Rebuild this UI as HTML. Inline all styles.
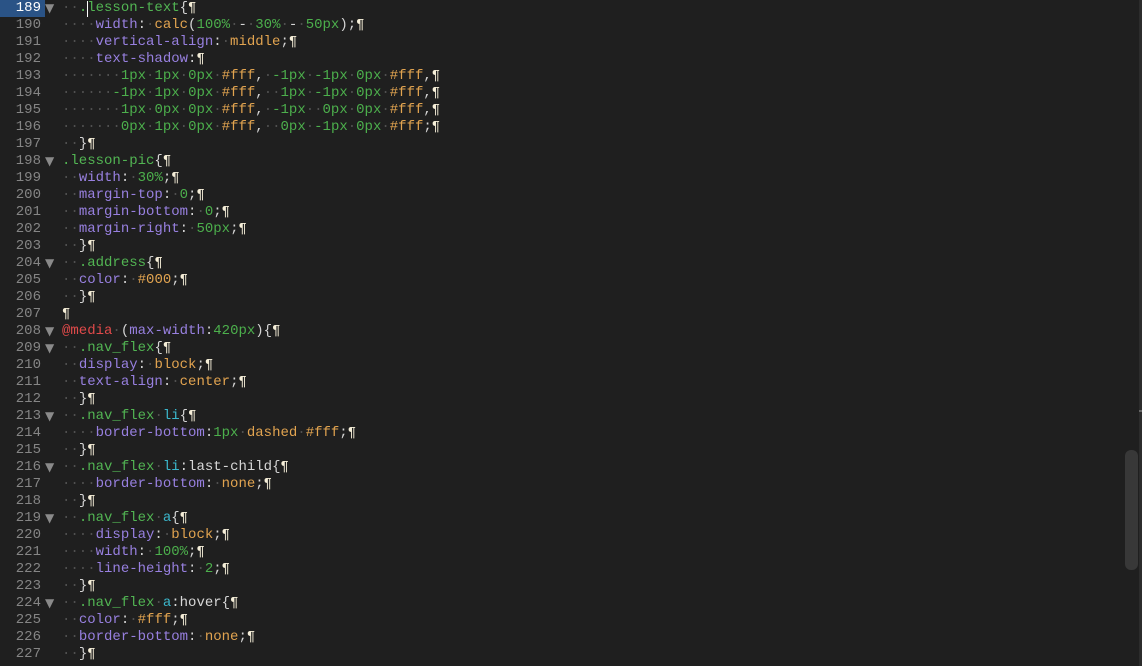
<!DOCTYPE html>
<html><head><meta charset="utf-8"><style>
html,body{margin:0;padding:0;background:#1f1f1f;width:1142px;height:666px;overflow:hidden}
#ed{position:relative;width:1142px;height:666px;font-family:"Liberation Mono",monospace;font-size:14px}
.l{position:absolute;left:0;height:17px;line-height:17px;white-space:pre;width:1100px}
.n{position:absolute;left:0;width:41px;text-align:right;color:#858585}
.a{background:#2a5386;color:#fff;width:45px;text-align:right;padding-right:4px;box-sizing:border-box}
.f{position:absolute;left:45px;color:#8a8a8a;font-size:12px;font-family:"DejaVu Sans",sans-serif}
.t{position:absolute;left:62px;color:#d4d4d4}
.d{color:#505050}.s{color:#52b553}.p{color:#9880e0}.v{color:#e2a450}.g{color:#4caf4c}.q{color:#f5eed8}.m{color:#e04a4a}.c{color:#3bb7cc}.w{color:#d8d8d8}
#sb{position:absolute;left:1125px;top:450px;width:13px;height:120px;background:#383838;border-radius:6px}
#tr{position:absolute;left:1139px;top:0;width:3px;height:666px;background:#2c2c2c}
#tk{position:absolute;left:1139px;top:410px;width:3px;height:2px;background:#666}
#cur{position:absolute;left:87px;top:1px;width:1px;height:16px;background:#fff}
</style></head><body><div id="ed">
<div id="tr"></div><div id="tk"></div><div id="sb"></div>
<div class="l" style="top:0"><span class="n a">189</span><span class="f">▼</span><span class="t"><span class="d">··</span><span class="s">.lesson-text</span>{<span class="q">¶</span></span></div>
<div class="l" style="top:17px"><span class="n">190</span><span class="t"><span class="d">····</span><span class="p">width</span>:<span class="d">·</span><span class="v">calc</span>(<span class="g">100%</span><span class="d">·</span>-<span class="d">·</span><span class="g">30%</span><span class="d">·</span>-<span class="d">·</span><span class="g">50px</span>);<span class="q">¶</span></span></div>
<div class="l" style="top:34px"><span class="n">191</span><span class="t"><span class="d">····</span><span class="p">vertical-align</span>:<span class="d">·</span><span class="v">middle</span>;<span class="q">¶</span></span></div>
<div class="l" style="top:51px"><span class="n">192</span><span class="t"><span class="d">····</span><span class="p">text-shadow</span>:<span class="q">¶</span></span></div>
<div class="l" style="top:68px"><span class="n">193</span><span class="t"><span class="d">·······</span><span class="g">1px</span><span class="d">·</span><span class="g">1px</span><span class="d">·</span><span class="g">0px</span><span class="d">·</span><span class="v">#fff</span>,<span class="d">·</span><span class="g">-1px</span><span class="d">·</span><span class="g">-1px</span><span class="d">·</span><span class="g">0px</span><span class="d">·</span><span class="v">#fff</span>,<span class="q">¶</span></span></div>
<div class="l" style="top:85px"><span class="n">194</span><span class="t"><span class="d">······</span><span class="g">-1px</span><span class="d">·</span><span class="g">1px</span><span class="d">·</span><span class="g">0px</span><span class="d">·</span><span class="v">#fff</span>,<span class="d">··</span><span class="g">1px</span><span class="d">·</span><span class="g">-1px</span><span class="d">·</span><span class="g">0px</span><span class="d">·</span><span class="v">#fff</span>,<span class="q">¶</span></span></div>
<div class="l" style="top:102px"><span class="n">195</span><span class="t"><span class="d">·······</span><span class="g">1px</span><span class="d">·</span><span class="g">0px</span><span class="d">·</span><span class="g">0px</span><span class="d">·</span><span class="v">#fff</span>,<span class="d">·</span><span class="g">-1px</span><span class="d">··</span><span class="g">0px</span><span class="d">·</span><span class="g">0px</span><span class="d">·</span><span class="v">#fff</span>,<span class="q">¶</span></span></div>
<div class="l" style="top:119px"><span class="n">196</span><span class="t"><span class="d">·······</span><span class="g">0px</span><span class="d">·</span><span class="g">1px</span><span class="d">·</span><span class="g">0px</span><span class="d">·</span><span class="v">#fff</span>,<span class="d">··</span><span class="g">0px</span><span class="d">·</span><span class="g">-1px</span><span class="d">·</span><span class="g">0px</span><span class="d">·</span><span class="v">#fff</span>;<span class="q">¶</span></span></div>
<div class="l" style="top:136px"><span class="n">197</span><span class="t"><span class="d">··</span>}<span class="q">¶</span></span></div>
<div class="l" style="top:153px"><span class="n">198</span><span class="f">▼</span><span class="t"><span class="s">.lesson-pic</span>{<span class="q">¶</span></span></div>
<div class="l" style="top:170px"><span class="n">199</span><span class="t"><span class="d">··</span><span class="p">width</span>:<span class="d">·</span><span class="g">30%</span>;<span class="q">¶</span></span></div>
<div class="l" style="top:187px"><span class="n">200</span><span class="t"><span class="d">··</span><span class="p">margin-top</span>:<span class="d">·</span><span class="g">0</span>;<span class="q">¶</span></span></div>
<div class="l" style="top:204px"><span class="n">201</span><span class="t"><span class="d">··</span><span class="p">margin-bottom</span>:<span class="d">·</span><span class="g">0</span>;<span class="q">¶</span></span></div>
<div class="l" style="top:221px"><span class="n">202</span><span class="t"><span class="d">··</span><span class="p">margin-right</span>:<span class="d">·</span><span class="g">50px</span>;<span class="q">¶</span></span></div>
<div class="l" style="top:238px"><span class="n">203</span><span class="t"><span class="d">··</span>}<span class="q">¶</span></span></div>
<div class="l" style="top:255px"><span class="n">204</span><span class="f">▼</span><span class="t"><span class="d">··</span><span class="s">.address</span>{<span class="q">¶</span></span></div>
<div class="l" style="top:272px"><span class="n">205</span><span class="t"><span class="d">··</span><span class="p">color</span>:<span class="d">·</span><span class="v">#000</span>;<span class="q">¶</span></span></div>
<div class="l" style="top:289px"><span class="n">206</span><span class="t"><span class="d">··</span>}<span class="q">¶</span></span></div>
<div class="l" style="top:306px"><span class="n">207</span><span class="t"><span class="q">¶</span></span></div>
<div class="l" style="top:323px"><span class="n">208</span><span class="f">▼</span><span class="t"><span class="m">@media</span><span class="d">·</span>(<span class="p">max-width</span>:<span class="g">420px</span>){<span class="q">¶</span></span></div>
<div class="l" style="top:340px"><span class="n">209</span><span class="f">▼</span><span class="t"><span class="d">··</span><span class="s">.nav_flex</span>{<span class="q">¶</span></span></div>
<div class="l" style="top:357px"><span class="n">210</span><span class="t"><span class="d">··</span><span class="p">display</span>:<span class="d">·</span><span class="v">block</span>;<span class="q">¶</span></span></div>
<div class="l" style="top:374px"><span class="n">211</span><span class="t"><span class="d">··</span><span class="p">text-align</span>:<span class="d">·</span><span class="v">center</span>;<span class="q">¶</span></span></div>
<div class="l" style="top:391px"><span class="n">212</span><span class="t"><span class="d">··</span>}<span class="q">¶</span></span></div>
<div class="l" style="top:408px"><span class="n">213</span><span class="f">▼</span><span class="t"><span class="d">··</span><span class="s">.nav_flex</span><span class="d">·</span><span class="c">li</span>{<span class="q">¶</span></span></div>
<div class="l" style="top:425px"><span class="n">214</span><span class="t"><span class="d">····</span><span class="p">border-bottom</span>:<span class="g">1px</span><span class="d">·</span><span class="v">dashed</span><span class="d">·</span><span class="v">#fff</span>;<span class="q">¶</span></span></div>
<div class="l" style="top:442px"><span class="n">215</span><span class="t"><span class="d">··</span>}<span class="q">¶</span></span></div>
<div class="l" style="top:459px"><span class="n">216</span><span class="f">▼</span><span class="t"><span class="d">··</span><span class="s">.nav_flex</span><span class="d">·</span><span class="c">li</span><span class="w">:last-child</span>{<span class="q">¶</span></span></div>
<div class="l" style="top:476px"><span class="n">217</span><span class="t"><span class="d">····</span><span class="p">border-bottom</span>:<span class="d">·</span><span class="v">none</span>;<span class="q">¶</span></span></div>
<div class="l" style="top:493px"><span class="n">218</span><span class="t"><span class="d">··</span>}<span class="q">¶</span></span></div>
<div class="l" style="top:510px"><span class="n">219</span><span class="f">▼</span><span class="t"><span class="d">··</span><span class="s">.nav_flex</span><span class="d">·</span><span class="c">a</span>{<span class="q">¶</span></span></div>
<div class="l" style="top:527px"><span class="n">220</span><span class="t"><span class="d">····</span><span class="p">display</span>:<span class="d">·</span><span class="v">block</span>;<span class="q">¶</span></span></div>
<div class="l" style="top:544px"><span class="n">221</span><span class="t"><span class="d">····</span><span class="p">width</span>:<span class="d">·</span><span class="g">100%</span>;<span class="q">¶</span></span></div>
<div class="l" style="top:561px"><span class="n">222</span><span class="t"><span class="d">····</span><span class="p">line-height</span>:<span class="d">·</span><span class="g">2</span>;<span class="q">¶</span></span></div>
<div class="l" style="top:578px"><span class="n">223</span><span class="t"><span class="d">··</span>}<span class="q">¶</span></span></div>
<div class="l" style="top:595px"><span class="n">224</span><span class="f">▼</span><span class="t"><span class="d">··</span><span class="s">.nav_flex</span><span class="d">·</span><span class="c">a</span><span class="w">:hover</span>{<span class="q">¶</span></span></div>
<div class="l" style="top:612px"><span class="n">225</span><span class="t"><span class="d">··</span><span class="p">color</span>:<span class="d">·</span><span class="v">#fff</span>;<span class="q">¶</span></span></div>
<div class="l" style="top:629px"><span class="n">226</span><span class="t"><span class="d">··</span><span class="p">border-bottom</span>:<span class="d">·</span><span class="v">none</span>;<span class="q">¶</span></span></div>
<div class="l" style="top:646px"><span class="n">227</span><span class="t"><span class="d">··</span>}<span class="q">¶</span></span></div>
<div id="cur"></div>
</div></body></html>
